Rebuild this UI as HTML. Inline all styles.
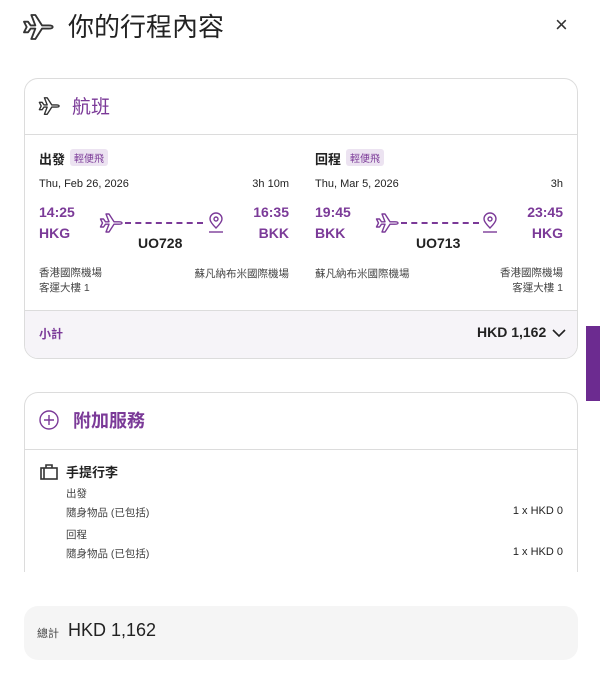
<!DOCTYPE html>
<html><head><meta charset="utf-8"><style>
*{margin:0;padding:0;box-sizing:border-box}
body{width:600px;height:692px;background:#fff;font-family:"Liberation Sans","Noto Sans CJK TC",sans-serif;color:#222;position:relative;overflow:hidden}
.a{position:absolute;white-space:nowrap}
.p{color:#7b3a98}
.card{position:absolute;left:24px;width:554px;border:1px solid #dcdcdc;border-radius:14px;background:#fff;overflow:hidden}
.tag{display:inline-block;background:#ece3f1;color:#7b3a98;font-size:10px;padding:1px 4px;border-radius:3px;margin-left:5px;vertical-align:2px}
.s{font-size:11px;color:#222}
.b{font-weight:bold}
</style></head><body>
<svg class="a" style="left:22px;top:11px" width="32" height="32" viewBox="0 0 24 24" fill="none" stroke="#333" stroke-width="1.4" stroke-linejoin="round"><path d="M1.5 8L4.5 8L6.5 10.8L10 10.8L7 3L10 3L15 10.8L20 10.8Q23 10.8 23 12Q23 13.2 20 13.2L15 13.2L10 21L7 21L10 13.2L6.5 13.2L4.5 16L1.5 16L3.5 12Z"/></svg>
<div class="a" style="left:68px;top:7px;font-size:26px;color:#222">你的行程內容</div>
<div class="a" style="left:555px;top:12px;font-size:22px;color:#333">×</div>

<div class="card" style="top:78px;height:281px">
 <svg class="a" style="left:13px;top:16px" width="22" height="22" viewBox="0 0 24 24" fill="none" stroke="#333" stroke-width="1.5" stroke-linejoin="round"><path d="M1.5 8L4.5 8L6.5 10.8L10 10.8L7 3L10 3L15 10.8L20 10.8Q23 10.8 23 12Q23 13.2 20 13.2L15 13.2L10 21L7 21L10 13.2L6.5 13.2L4.5 16L1.5 16L3.5 12Z"/></svg>
 <div class="a p" style="left:47px;top:13px;font-size:19px">航班</div>
 <div class="a" style="left:0;top:55px;width:554px;border-top:1px solid #dcdcdc"></div>

 <div class="a b" style="left:14px;top:70px;font-size:13px">出發<span class="tag" style="font-weight:normal">輕便飛</span></div>
 <div class="a s" style="left:14px;top:99px">Thu, Feb 26, 2026</div>
 <div class="a s" style="left:222px;top:99px;width:42px;text-align:right">3h 10m</div>
 <div class="a p b" style="left:14px;top:123px;font-size:14px;line-height:21px">14:25<br>HKG</div>
 <div class="a p b" style="left:214px;top:123px;width:50px;text-align:right;font-size:14px;line-height:21px">16:35<br>BKK</div>
 <svg class="a" style="left:74px;top:132px" width="24" height="24" viewBox="0 0 24 24" fill="none" stroke="#7b3a98" stroke-width="1.4" stroke-linejoin="round"><path d="M1.5 8L4.5 8L6.5 10.8L10 10.8L7 3L10 3L15 10.8L20 10.8Q23 10.8 23 12Q23 13.2 20 13.2L15 13.2L10 21L7 21L10 13.2L6.5 13.2L4.5 16L1.5 16L3.5 12Z"/></svg>
 <div class="a" style="left:100px;top:143px;width:78px;border-top:2px dashed #7b3a98"></div>
 <svg class="a" style="left:181px;top:133px" width="20" height="22" viewBox="0 0 20 22" fill="none" stroke="#7b3a98" stroke-width="1.4"><path d="M10 16C6 12 4 9.5 4 7A6 6 0 0 1 16 7C16 9.5 14 12 10 16Z"/><circle cx="10" cy="7" r="2"/><path d="M3 20H17"/></svg>
 <div class="a b" style="left:113px;top:156px;font-size:14px">UO728</div>
 <div class="a s" style="left:14px;top:187px;line-height:15px;font-size:10.5px;color:#444">香港國際機場<br>客運大樓 1</div>
 <div class="a s" style="left:160px;top:187px;width:104px;text-align:right;font-size:10.5px;color:#444">蘇凡納布米國際機場</div>

 <div class="a b" style="left:290px;top:70px;font-size:13px">回程<span class="tag" style="font-weight:normal">輕便飛</span></div>
 <div class="a s" style="left:290px;top:99px">Thu, Mar 5, 2026</div>
 <div class="a s" style="left:500px;top:99px;width:38px;text-align:right">3h</div>
 <div class="a p b" style="left:290px;top:123px;font-size:14px;line-height:21px">19:45<br>BKK</div>
 <div class="a p b" style="left:488px;top:123px;width:50px;text-align:right;font-size:14px;line-height:21px">23:45<br>HKG</div>
 <svg class="a" style="left:350px;top:132px" width="24" height="24" viewBox="0 0 24 24" fill="none" stroke="#7b3a98" stroke-width="1.4" stroke-linejoin="round"><path d="M1.5 8L4.5 8L6.5 10.8L10 10.8L7 3L10 3L15 10.8L20 10.8Q23 10.8 23 12Q23 13.2 20 13.2L15 13.2L10 21L7 21L10 13.2L6.5 13.2L4.5 16L1.5 16L3.5 12Z"/></svg>
 <div class="a" style="left:376px;top:143px;width:78px;border-top:2px dashed #7b3a98"></div>
 <svg class="a" style="left:455px;top:133px" width="20" height="22" viewBox="0 0 20 22" fill="none" stroke="#7b3a98" stroke-width="1.4"><path d="M10 16C6 12 4 9.5 4 7A6 6 0 0 1 16 7C16 9.5 14 12 10 16Z"/><circle cx="10" cy="7" r="2"/><path d="M3 20H17"/></svg>
 <div class="a b" style="left:391px;top:156px;font-size:14px">UO713</div>
 <div class="a s" style="left:290px;top:187px;font-size:10.5px;color:#444">蘇凡納布米國際機場</div>
 <div class="a s" style="left:438px;top:187px;width:100px;text-align:right;line-height:15px;font-size:10.5px;color:#444">香港國際機場<br>客運大樓 1</div>

 <div class="a" style="left:0;top:231px;width:554px;height:50px;background:#f6f4f8;border-top:1px solid #dcdcdc"></div>
 <div class="a p b" style="left:14px;top:246px;font-size:12px">小計</div>
 <div class="a b" style="left:452px;top:245px;font-size:14px">HKD 1,162</div>
 <svg class="a" style="left:527px;top:249px" width="14" height="10" viewBox="0 0 14 10" fill="none" stroke="#222" stroke-width="1.6"><path d="M1 2L7 8L13 2"/></svg>
</div>

<div class="a" style="left:586px;top:326px;width:14px;height:75px;background:#6c2b90"></div>

<div class="card" style="top:392px;height:190px;border-bottom:none;border-radius:14px 14px 0 0">
 <svg class="a" style="left:13px;top:16px" width="22" height="22" viewBox="0 0 22 22" fill="none" stroke="#7b3a98" stroke-width="1.4"><circle cx="11" cy="11" r="9"/><path d="M11 6V16M6 11H16"/></svg>
 <div class="a p b" style="left:48px;top:14px;font-size:18px">附加服務</div>
 <div class="a" style="left:0;top:56px;width:554px;border-top:1px solid #dcdcdc"></div>
 <svg class="a" style="left:15px;top:71px" width="18" height="16" viewBox="0 0 18 16" fill="none" stroke="#333" stroke-width="1.6"><rect x="1" y="4" width="16" height="11"/><path d="M6 4V1H12V4M4 4V15"/></svg>
 <div class="a b" style="left:41px;top:69px;font-size:13px">手提行李</div>
 <div class="a" style="left:41px;top:93px;font-size:10.5px;color:#444">出發</div>
 <div class="a" style="left:41px;top:112px;font-size:10.5px;color:#444">隨身物品 (已包括)</div>
 <div class="a" style="left:460px;top:112px;width:78px;text-align:right;font-size:11px">1 x HKD 0</div>
 <div class="a" style="left:41px;top:134px;font-size:10.5px;color:#444">回程</div>
 <div class="a" style="left:41px;top:153px;font-size:10.5px;color:#444">隨身物品 (已包括)</div>
 <div class="a" style="left:460px;top:153px;width:78px;text-align:right;font-size:11px">1 x HKD 0</div>
</div>
<div class="a" style="left:0;top:572px;width:600px;height:120px;background:#fff"></div>

<div class="a" style="left:24px;top:606px;width:554px;height:54px;background:#f5f5f5;border-radius:14px"></div>
<div class="a" style="left:37px;top:625px;font-size:11px;color:#444">總計</div>
<div class="a" style="left:68px;top:620px;font-size:18px;color:#222">HKD 1,162</div>
</body></html>
